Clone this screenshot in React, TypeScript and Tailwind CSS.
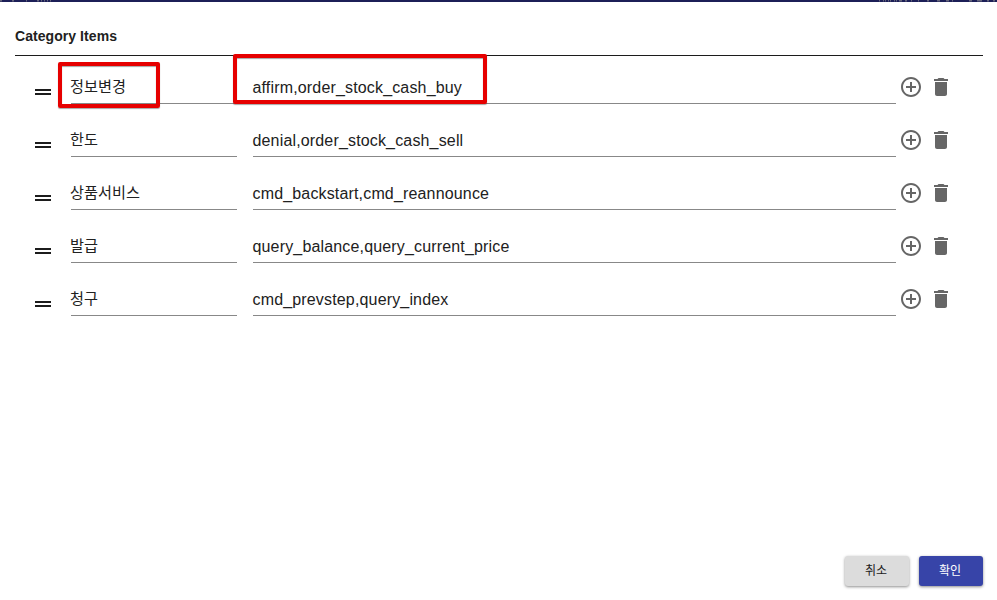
import React from "react";

type Item = { name: string; intents: string };

const items: Item[] = [
  { name: "정보변경", intents: "affirm,order_stock_cash_buy" },
  { name: "한도", intents: "denial,order_stock_cash_sell" },
  { name: "상품서비스", intents: "cmd_backstart,cmd_reannounce" },
  { name: "발급", intents: "query_balance,query_current_price" },
  { name: "청구", intents: "cmd_prevstep,query_index" },
];

// Tips of the page header's glyphs, cut off by the dialog: [x, width]
const marks: [number, number][] = [
  [0, 2], [12, 2], [26, 1], [37, 2], [41, 1], [44, 1], [47, 1], [50, 1],
  [879, 1], [883, 1], [885, 1], [888, 1], [890, 1], [894, 1], [896, 1],
  [899, 3], [905, 2], [911, 1], [918, 1], [927, 2], [937, 3], [946, 3],
  [952, 1], [969, 3], [977, 5], [987, 2], [993, 2],
];

function HeaderStrip() {
  return (
    <svg className="block h-[2px] w-full shrink-0 bg-[#1c1f57]" viewBox="0 0 997 2">
      {marks.map(([x, w]) => (
        <rect key={x} x={x} y="0" width={w} height="1.5" fill="#66667c" />
      ))}
    </svg>
  );
}

function Handle() {
  return (
    <div className="mt-[33px] flex h-1.5 w-4 flex-col justify-between">
      <div className="h-0.5 bg-[#1c1c1c]" />
      <div className="h-0.5 bg-[#1c1c1c]" />
    </div>
  );
}

function AddIcon() {
  return (
    <svg className="size-6" viewBox="0 0 24 24" fill="currentColor">
      <path d="M13 7h-2v4H7v2h4v4h2v-4h4v-2h-4V7zm-1-5C6.48 2 2 6.48 2 12s4.48 10 10 10 10-4.48 10-10S17.52 2 12 2zm0 18c-4.41 0-8-3.59-8-8s3.59-8 8-8 8 3.59 8 8-3.59 8-8 8z" />
    </svg>
  );
}

function DeleteIcon() {
  return (
    <svg className="size-6" viewBox="0 0 24 24" fill="currentColor">
      <path d="M6 19c0 1.1.9 2 2 2h8c1.1 0 2-.9 2-2V7H6v12zM19 4h-3.5l-1-1h-5l-1 1H5v2h14V4z" />
    </svg>
  );
}

function Row({ item, marked }: { item: Item; marked: boolean }) {
  return (
    <div className="relative flex h-[53px] items-start pl-5">
      <Handle />
      <div className="ml-5 h-12 w-[166px] border-b border-[#888888] pt-[19px] text-[15.2px] leading-6">
        <span className="-ml-px">{item.name}</span>
      </div>
      <div className="ml-4 h-12 w-[643px] border-b border-[#888888] pt-5 text-base leading-6 tracking-[0.16px]">
        <span className="-ml-[0.5px]">{item.intents}</span>
      </div>
      <div className="ml-[3px] mt-[19px] flex gap-1.5 text-[#666666]">
        <AddIcon />
        <DeleteIcon />
      </div>
      {marked && (
        <>
          <div className="absolute left-[43px] top-[6px] h-[46px] w-[102px] rounded-[2px] border-4 border-[#e60000] shadow-[0_1px_1px_rgba(0,0,0,0.35),inset_0_1px_1px_rgba(0,0,0,0.35)]" />
          <div className="absolute left-[218px] top-[-2px] h-[50px] w-[254px] rounded-[2px] border-4 border-[#e60000] shadow-[0_1px_1px_rgba(0,0,0,0.35),inset_0_1px_1px_rgba(0,0,0,0.35)]" />
        </>
      )}
    </div>
  );
}

export default function App() {
  return (
    <div className="flex h-[600px] w-[997px] flex-col overflow-hidden bg-white font-['Liberation_Sans','Noto_Sans_CJK_KR',sans-serif] text-[#212121]">
      <HeaderStrip />
      <main className="flex flex-1 flex-col pl-[15px] pr-3.5">
        <h1 className="h-[54px] border-b border-[#1c1c1c] pt-6 text-sm font-bold leading-5 tracking-[0.06px]">
          Category Items
        </h1>
        <div>
          {items.map((item, i) => (
            <Row key={item.name} item={item} marked={i === 0} />
          ))}
        </div>
        <div className="mb-3.5 mt-auto flex justify-end gap-2.5 text-xs">
          <button className="h-[30px] w-16 rounded-[3px] bg-[#dcdcdc] pr-0.5 shadow-[0_1px_3px_rgba(0,0,0,0.45)]">
            취소
          </button>
          <button className="h-[30px] w-16 rounded-[3px] bg-[#3744a8] pr-0.5 text-white shadow-[0_1px_3px_rgba(0,0,0,0.45)]">
            확인
          </button>
        </div>
      </main>
    </div>
  );
}
